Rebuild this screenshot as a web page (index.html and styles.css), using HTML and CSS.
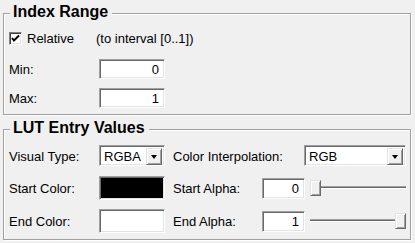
FILE: index.html
```html
<!DOCTYPE html>
<html>
<head>
<meta charset="utf-8">
<link rel="stylesheet" href="styles.css">
</head>
<body>
<div class="panel">
  <fieldset class="group g1">
    <legend>Index Range</legend>
    <div class="row r-check">
      <label class="check">
        <span class="cb"><svg width="9" height="9" viewBox="0 0 9 9"><polyline points="1,4 3,6.5 8,1.5" fill="none" stroke="#000" stroke-width="2"/></svg></span>
        <span>Relative</span>
      </label>
      <span class="note">(to interval [0..1])</span>
    </div>
    <div class="row r-min"><span class="lbl">Min:</span><div class="field num w66">0</div></div>
    <div class="row r-max"><span class="lbl">Max:</span><div class="field num w66">1</div></div>
  </fieldset>

  <fieldset class="group g2">
    <legend>LUT Entry Values</legend>
    <div class="grid">
      <span class="lbl">Visual Type:</span>
      <div class="combo c-vt"><span class="ctext">RGBA</span><span class="cbtn"><span class="arrow"></span></span></div>
      <span class="lbl c-right">Color Interpolation:</span>
      <div class="combo c-ci"><span class="ctext">RGB</span><span class="cbtn"><span class="arrow"></span></span></div>

      <span class="lbl">Start Color:</span>
      <div class="swatch black"></div>
      <span class="lbl c-alpha">Start Alpha:</span>
      <div class="field num alpha">0</div>
      <div class="slider"><div class="track"></div><div class="thumb" style="left:0%"></div></div>

      <span class="lbl">End Color:</span>
      <div class="swatch white"></div>
      <span class="lbl c-alpha">End Alpha:</span>
      <div class="field num alpha">1</div>
      <div class="slider"><div class="track"></div><div class="thumb" style="left:calc(100% - 11px)"></div></div>
    </div>
  </fieldset>
</div>
</body>
</html>
```
FILE: styles.css
```css
html, body {
  margin: 0;
  padding: 0;
  background: #f0f0f0;
}
body {
  font-family: "Liberation Sans", Arial, sans-serif;
  font-size: 13px;
  color: #000;
  width: 415px;
  height: 243px;
  overflow: hidden;
}
.panel {
  display: flex;
  flex-direction: column;
  gap: 4px;
  padding: 3px 4px 0 3px;
}
.group {
  margin: 0;
  min-width: 0;
  border: 1px solid #a0a0a0;
  box-shadow: 1px 1px 0 #fff, inset 1px 1px 0 #fff;
  padding: 0 4px 6px 5px;
}
.group legend {
  font-weight: bold;
  font-size: 16px;
  line-height: 18px;
  padding: 0 4px 3px 3px;
  margin-left: 1px;
  background: #f0f0f0;
}
.row {
  display: flex;
  align-items: center;
}
.r-check { height: 20px; margin-top: 4px; }
.r-min { height: 20px; margin-top: 11px; }
.r-max { height: 20px; margin-top: 9px; }
.lbl { white-space: nowrap; }
.row .lbl { width: 90px; }
.check {
  display: flex;
  align-items: center;
  gap: 5px;
  width: 87px;
}
.cb {
  width: 13px;
  height: 13px;
  box-sizing: border-box;
  background: #fff;
  border: 1px solid;
  border-color: #808080 #fff #fff #808080;
  box-shadow: inset 1px 1px 0 #404040, inset -1px -1px 0 #e3e3e3;
  display: flex;
  align-items: center;
  justify-content: center;
}
.cb svg { display: block; }
.field {
  box-sizing: border-box;
  height: 20px;
  background: #fff;
  border: 1px solid;
  border-color: #a0a0a0 #fff #fff #a0a0a0;
  box-shadow: inset 1px 1px 0 #696969, inset -1px -1px 0 #e3e3e3;
  display: flex;
  align-items: center;
}
.num {
  justify-content: flex-end;
  padding-right: 5px;
}
.w66 { width: 66px; }

.grid {
  display: grid;
  grid-template-columns: 90px 66px 8px 89px 42px 102px;
  grid-template-rows: 22px 24px 24px;
  row-gap: 9px;
  padding-top: 5px;
  align-items: center;
}
.grid > .lbl:nth-child(1),
.grid > .lbl:nth-child(5),
.grid > .lbl:nth-child(10) { grid-column: 1; }
.c-right { grid-column: 4 / 6; }
.c-alpha { grid-column: 4; }
.c-vt { grid-column: 2; }
.c-ci { grid-column: 6; }
.swatch { grid-column: 2; }
.alpha { grid-column: 5; height: 21px; width: 43px; }
.slider { grid-column: 6; }

.combo {
  align-self: start;
  box-sizing: border-box;
  height: 21px;
  background: #fff;
  border: 1px solid;
  border-color: #a0a0a0 #fff #fff #a0a0a0;
  box-shadow: inset 1px 1px 0 #696969, inset -1px -1px 0 #e3e3e3;
  display: flex;
  align-items: center;
  padding: 2px 2px 1px 4px;
}
.ctext { flex: 1; }
.cbtn {
  box-sizing: border-box;
  width: 16px;
  height: 17px;
  background: #f0f0f0;
  border: 1px solid;
  border-color: #e3e3e3 #696969 #696969 #e3e3e3;
  box-shadow: inset 1px 1px 0 #fff, inset -1px -1px 0 #a0a0a0;
  display: flex;
  align-items: center;
  justify-content: center;
}
.arrow {
  width: 0;
  height: 0;
  border-left: 3.5px solid transparent;
  border-right: 3.5px solid transparent;
  border-top: 4px solid #000;
  margin-top: 1px;
}
.swatch {
  box-sizing: border-box;
  width: 66px;
  height: 24px;
  border: 1px solid;
  border-color: #a0a0a0 #fff #fff #a0a0a0;
  box-shadow: inset 1px 1px 0 #696969, inset -1px -1px 0 #e3e3e3;
}
.swatch.black { background: #000; }
.swatch.white { background: #fff; }

.slider {
  position: relative;
  height: 16px;
  width: 96px;
  margin-left: 6px;
}
.track {
  position: absolute;
  left: 0;
  right: 0;
  top: 6px;
  height: 1px;
  background: #696969;
  border-top: 1px solid #a0a0a0;
  border-bottom: 1px solid #fff;
}
.thumb {
  position: absolute;
  top: 0;
  box-sizing: border-box;
  width: 11px;
  height: 16px;
  background: #f0f0f0;
  border: 1px solid;
  border-color: #e3e3e3 #696969 #696969 #e3e3e3;
  box-shadow: inset 1px 1px 0 #fff, inset -1px -1px 0 #a0a0a0;
}
```
